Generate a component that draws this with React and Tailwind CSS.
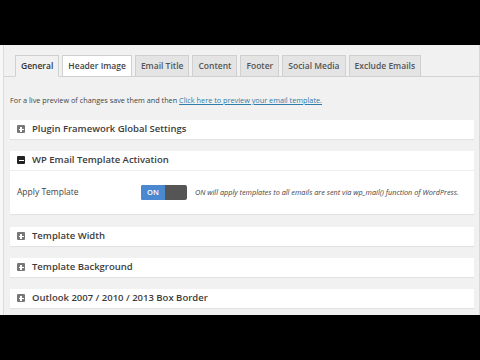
const font = { fontFamily: '"Open Sans", "Noto Sans", sans-serif' }

const tabs = [
  { label: 'General', state: 'active' },
  { label: 'Header Image', state: 'hover' },
  { label: 'Email Title' },
  { label: 'Content' },
  { label: 'Footer' },
  { label: 'Social Media' },
  { label: 'Exclude Emails' },
]

function BoxIcon({ open }) {
  return (
    <span
      className={`flex h-[8px] w-[8px] shrink-0 items-center justify-center rounded-[1px] ${
        open ? 'bg-[#222]' : 'bg-[#777]'
      }`}
    >
      <span className="relative block h-[1.5px] w-[5px] bg-white">
        {!open && <span className="absolute left-[1.75px] top-[-1.75px] block h-[5px] w-[1.5px] bg-white" />}
      </span>
    </span>
  )
}

function PanelHeader({ title, open }) {
  return (
    <div className="flex h-[19px] items-center gap-[7px] pl-[7px]">
      <BoxIcon open={open} />
      <span className="text-[9.5px] font-semibold text-[#3c3c3c]">{title}</span>
    </div>
  )
}

function Panel({ title }) {
  return (
    <div className="bg-white shadow-[0_1px_1px_rgba(0,0,0,0.06)]">
      <PanelHeader title={title} />
    </div>
  )
}

export default function App() {
  return (
    <div className="flex h-[360px] w-[480px] flex-col bg-black" style={font}>
      <div className="h-[45px] shrink-0" />
      <div className="flex h-[270px] shrink-0 border-l-[3px] border-l-[#f7f7f7] bg-[#f1f1f1]">
        <div className="flex flex-1 flex-col border-l border-l-[#dcdcdc] border-r border-r-[#d8d8d8]">
          <div className="mt-[10px] flex gap-[3px] border-b border-[#d4d4d4] pl-[11px]">
            {tabs.map((t) => (
              <div
                key={t.label}
                className={`-mb-px flex h-[22px] items-center border border-[#d0d0d0] px-[5px] text-[8.5px] font-semibold ${
                  t.state === 'active'
                    ? 'border-b-[#f1f1f1] bg-[#f1f1f1] text-[#333]'
                    : t.state === 'hover'
                    ? 'bg-white text-[#444]'
                    : 'bg-[#e4e4e4] text-[#555]'
                }`}
              >
                {t.label}
              </div>
            ))}
          </div>

          <p className="mt-[18px] pl-[6px] text-[7.3px] text-[#444]">
            For a live preview of changes save them and then{' '}
            <span className="text-[#2f7ca8] underline">Click here to preview your email template.</span>
          </p>

          <div className="mt-[14px] flex flex-col gap-[12px] pl-[6px] pr-[5px]">
            <Panel title="Plugin Framework Global Settings" />

            <div className="bg-white shadow-[0_1px_1px_rgba(0,0,0,0.06)]">
              <PanelHeader title="WP Email Template Activation" open />
              <div className="border-t border-[#eeeeee] flex h-[44px] items-center pl-[7px]">
                <span className="w-[124px] text-[8.5px] text-[#444]">Apply Template</span>
                <div className="flex h-[15px] w-[46px] overflow-hidden rounded-[2px] bg-[#555]">
                  <div className="flex w-[24px] items-center justify-center bg-[#4a89cf] text-[7.5px] font-semibold text-white">
                    ON
                  </div>
                </div>
                <span className="ml-[8px] text-[7.3px] italic text-[#444]">
                  ON will apply templates to all emails are sent via wp_mail() function of WordPress.
                </span>
              </div>
            </div>

            <div className="mt-[1px]">
              <Panel title="Template Width" />
            </div>
            <Panel title="Template Background" />
            <Panel title="Outlook 2007 / 2010 / 2013 Box Border" />
          </div>
        </div>
      </div>
      <div className="flex-1" />
    </div>
  )
}
